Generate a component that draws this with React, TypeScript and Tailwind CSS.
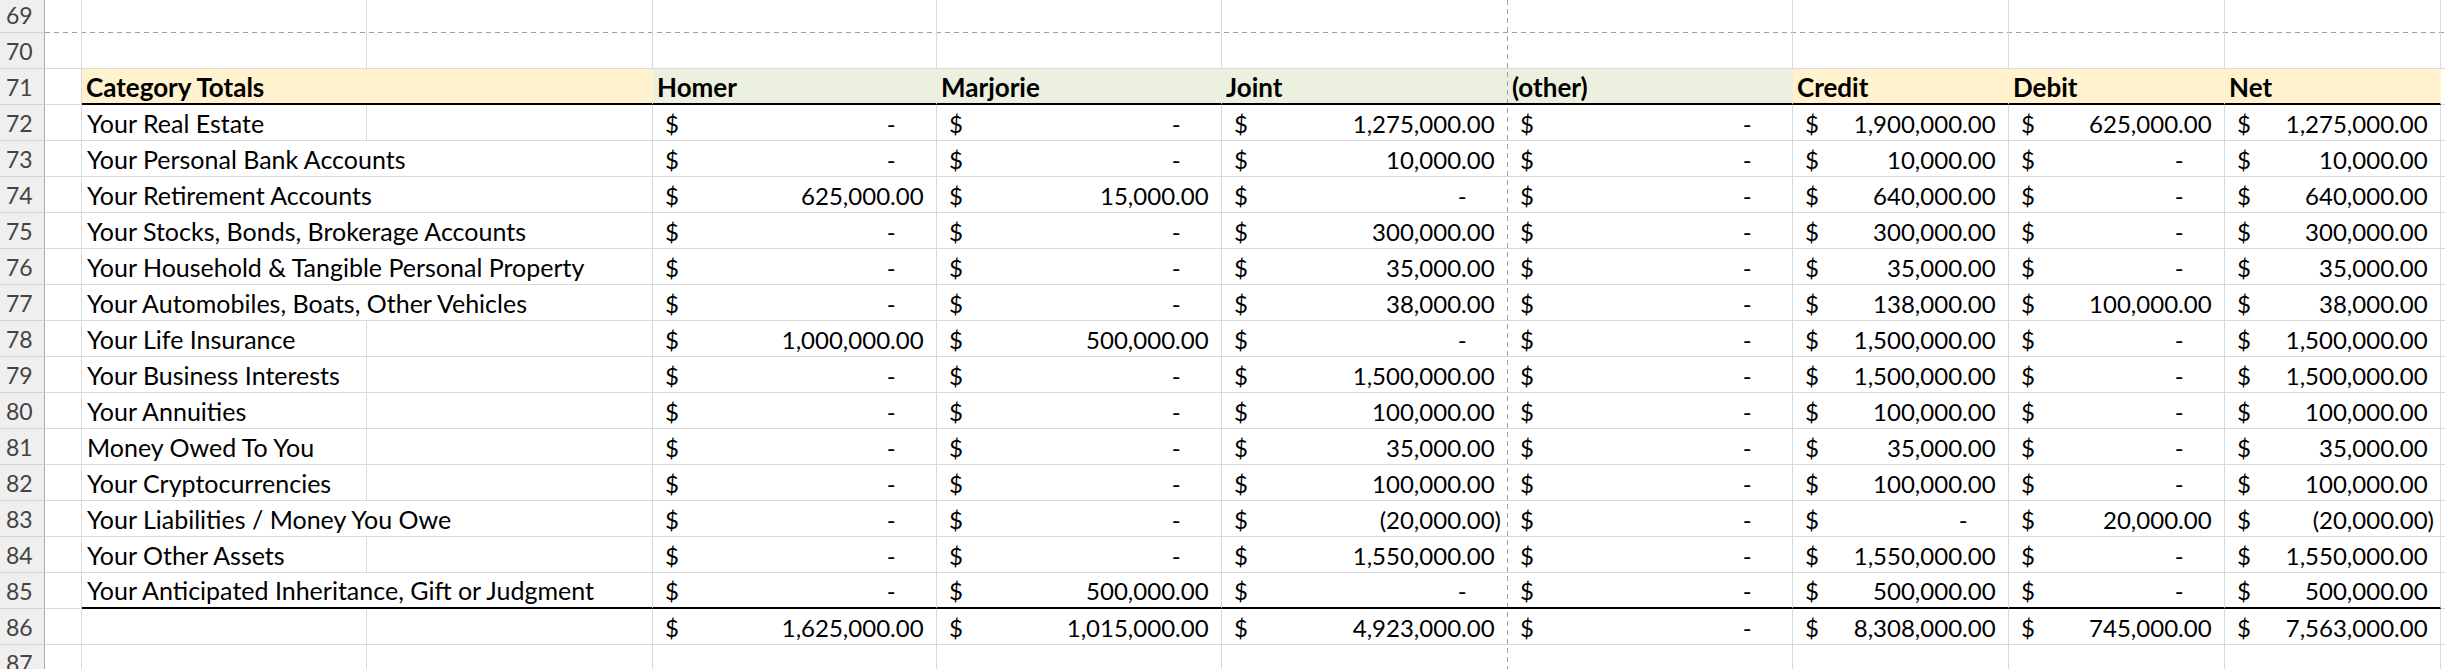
import React from "react";

type Row = { label: string; vals: number[]; wide?: boolean };

const rows: Row[] = [
  { label: "Your Real Estate", vals: [0, 0, 1275000, 0, 1900000, 625000, 1275000] },
  { label: "Your Personal Bank Accounts", vals: [0, 0, 10000, 0, 10000, 0, 10000], wide: true },
  { label: "Your Retirement Accounts", vals: [625000, 15000, 0, 0, 640000, 0, 640000], wide: true },
  { label: "Your Stocks, Bonds, Brokerage Accounts", vals: [0, 0, 300000, 0, 300000, 0, 300000], wide: true },
  { label: "Your Household & Tangible Personal Property", vals: [0, 0, 35000, 0, 35000, 0, 35000], wide: true },
  { label: "Your Automobiles, Boats, Other Vehicles", vals: [0, 0, 38000, 0, 138000, 100000, 38000], wide: true },
  { label: "Your Life Insurance", vals: [1000000, 500000, 0, 0, 1500000, 0, 1500000] },
  { label: "Your Business Interests", vals: [0, 0, 1500000, 0, 1500000, 0, 1500000] },
  { label: "Your Annuities", vals: [0, 0, 100000, 0, 100000, 0, 100000] },
  { label: "Money Owed To You", vals: [0, 0, 35000, 0, 35000, 0, 35000] },
  { label: "Your Cryptocurrencies", vals: [0, 0, 100000, 0, 100000, 0, 100000] },
  { label: "Your Liabilities / Money You Owe", vals: [0, 0, -20000, 0, 0, 20000, -20000], wide: true },
  { label: "Your Other Assets", vals: [0, 0, 1550000, 0, 1550000, 0, 1550000] },
  { label: "Your Anticipated Inheritance, Gift or Judgment", vals: [0, 500000, 0, 0, 500000, 0, 500000], wide: true },
];

const totals = [1625000, 1015000, 4923000, 0, 8308000, 745000, 7563000];

const headers = [
  { name: "Homer", fill: "green" },
  { name: "Marjorie", fill: "green" },
  { name: "Joint", fill: "green" },
  { name: "(other)", fill: "green" },
  { name: "Credit", fill: "yellow" },
  { name: "Debit", fill: "yellow" },
  { name: "Net", fill: "yellow" },
];

const fmt = (n: number) =>
  Math.abs(n).toLocaleString("en-US", { minimumFractionDigits: 2, maximumFractionDigits: 2 });

const base =
  "flex items-end border-[#D9D9D9] text-[25px] leading-none text-black whitespace-nowrap";

// page-break lines, drawn against the viewport so the dashes run on across cells
const vDash =
  "pr-px bg-fixed bg-no-repeat bg-[position:1507px_0] bg-[size:1px_100%] bg-[image:repeating-linear-gradient(to_bottom,#a0a0a0_0_5px,transparent_5px_9px)]";
const hDash =
  "bg-fixed bg-no-repeat bg-[position:0_32px] bg-[size:100%_1px] bg-[image:repeating-linear-gradient(to_right,#a0a0a0_0_5px,transparent_5px_9px)]";
const hvDash =
  "bg-fixed bg-no-repeat bg-[position:1507px_0,0_32px] bg-[size:1px_100%,100%_1px] bg-[image:repeating-linear-gradient(to_bottom,#a0a0a0_0_5px,transparent_5px_9px),repeating-linear-gradient(to_right,#a0a0a0_0_5px,transparent_5px_9px)]";

// col: 1 = A, 2 = B ... 6 = Joint, 11 = trailing sliver
function cellCls(
  col: number,
  row: number,
  opts: { black?: boolean; head?: boolean; extra?: string } = {},
) {
  const parts = [base, opts.head ? "pb-[3px]" : "pb-[4px]"];
  if (col !== 6 && col !== 11) parts.push("border-r");
  if (row !== 69) parts.push(opts.black ? "border-b-2 border-b-black" : "border-b");
  if (col === 6 && row === 69) parts.push(hvDash);
  else if (col === 6) parts.push(vDash);
  else if (row === 69) parts.push(hDash);
  if (opts.extra) parts.push(opts.extra);
  return parts.join(" ");
}

function Money({ v }: { v: number }) {
  return (
    <span className="flex w-full items-end text-[24px]">
      <span className="pl-[12px]">$</span>
      <span className="ml-auto pr-[6px]">
        {v === 0 ? (
          <>
            <span className="mr-[28px]">-</span>
            <span className="invisible">)</span>
          </>
        ) : v < 0 ? (
          `(${fmt(v)})`
        ) : (
          <>
            {fmt(v)}
            <span className="invisible">)</span>
          </>
        )}
      </span>
    </span>
  );
}

function RowNum({ n }: { n: number }) {
  return (
    <div className="flex items-end pb-[5px] pl-[6px] bg-[#EFEFEF] border-r border-b border-r-[#ABABAB] border-b-[#D5D5D5] text-[23px] leading-none text-[#444]">
      {n}
    </div>
  );
}

function emptyRow(n: number) {
  const cells: React.ReactNode[] = [<RowNum key={`h${n}`} n={n} />];
  for (let c = 1; c < 12; c++) {
    cells.push(<div key={`${n}-${c}`} className={cellCls(c, n)} />);
  }
  return cells;
}

export default function App() {
  const cells: React.ReactNode[] = [];

  cells.push(...emptyRow(69));
  cells.push(...emptyRow(70));

  // header row 71
  cells.push(<RowNum key="h71" n={71} />);
  cells.push(<div key="71-a" className={cellCls(1, 71)} />);
  cells.push(
    <div
      key="71-b"
      className={cellCls(3, 71, {
        black: true,
        head: true,
        extra: "col-span-2 pl-[4px] text-[26px] font-bold bg-[#FFF2CC] border-r-transparent",
      })}
    >
      Category Totals
    </div>,
  );
  headers.forEach((h, i) => {
    const fill = h.fill === "green" ? "bg-[#EBF1DE]" : "bg-[#FFF2CC]";
    cells.push(
      <div
        key={`71-${h.name}`}
        className={cellCls(4 + i, 71, {
          black: true,
          head: true,
          extra: `pl-[4px] text-[26px] font-bold ${fill} border-r-transparent`,
        })}
      >
        {h.name}
      </div>,
    );
  });
  cells.push(<div key="71-z" className={cellCls(11, 71)} />);

  rows.forEach((r, idx) => {
    const n = 72 + idx;
    const black = idx === rows.length - 1;
    cells.push(<RowNum key={`h${n}`} n={n} />);
    cells.push(<div key={`${n}-a`} className={cellCls(1, n)} />);
    if (r.wide) {
      cells.push(
        <div key={`${n}-b`} className={cellCls(3, n, { black, extra: "col-span-2 pl-[5px]" })}>
          {r.label}
        </div>,
      );
    } else {
      cells.push(
        <div key={`${n}-b`} className={cellCls(2, n, { black, extra: "pl-[5px]" })}>
          {r.label}
        </div>,
      );
      cells.push(<div key={`${n}-c`} className={cellCls(3, n, { black })} />);
    }
    r.vals.forEach((v, i) => {
      cells.push(
        <div key={`${n}-v${i}`} className={cellCls(4 + i, n, { black })}>
          <Money v={v} />
        </div>,
      );
    });
    cells.push(<div key={`${n}-z`} className={cellCls(11, n)} />);
  });

  // totals row 86
  cells.push(<RowNum key="h86" n={86} />);
  cells.push(<div key="86-a" className={cellCls(1, 86)} />);
  cells.push(<div key="86-b" className={cellCls(2, 86)} />);
  cells.push(<div key="86-c" className={cellCls(3, 86)} />);
  totals.forEach((v, i) => {
    cells.push(
      <div key={`86-v${i}`} className={cellCls(4 + i, 86)}>
        <Money v={v} />
      </div>,
    );
  });
  cells.push(<div key="86-z" className={cellCls(11, 86)} />);

  cells.push(...emptyRow(87));

  return (
    <div className="h-[669px] w-[2445px] overflow-hidden bg-white font-['Lato','Liberation_Sans',sans-serif]">
      <div className="grid grid-cols-[45px_37px_285px_286px_284px_285px_286px_285px_216px_216px_216px_4px] grid-rows-[33px_repeat(17,36px)_36px]">
        {cells}
      </div>
    </div>
  );
}
